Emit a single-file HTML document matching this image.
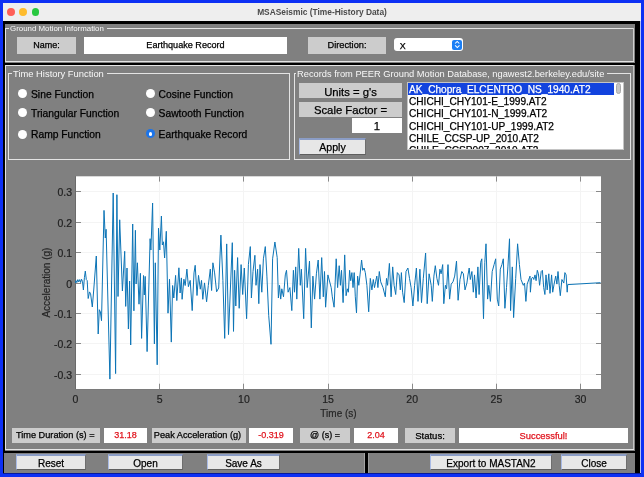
<!DOCTYPE html>
<html><head><meta charset="utf-8">
<style>
*{margin:0;padding:0;box-sizing:border-box}
html,body{width:644px;height:477px;overflow:hidden;background:#0d30f4;font-family:"Liberation Sans",sans-serif}
body{will-change:transform}
.a{position:absolute}
.t{position:absolute;white-space:nowrap}
#title{left:3px;top:3px;width:638px;height:18px;background:#eeeeee}
.dot{position:absolute;width:7.8px;height:7.8px;border-radius:50%;top:5px}
#content{left:3px;top:21px;width:637px;height:452px;background:#000}
.gray{background:#808080}
.bl{position:absolute;background:#e4e4e4}
.ptitle{position:absolute;color:#f8f8f8;font-size:9px;background:#808080;padding:0 3px 0 1px;line-height:10px}
.lab{position:absolute;background:#cccccc;color:#000;font-size:9px;text-align:center}
.fld{position:absolute;background:#fff;color:#000;text-align:center}
.radio{position:absolute;width:9px;height:9px;border-radius:50%;background:#fff;margin:0.4px 0 0 0}
.rt{position:absolute;font-size:10.3px;color:#000;white-space:nowrap;line-height:12px;margin-top:1px}
.btn{position:absolute;background:#e7e7e7;border:1px solid #5e5e5e;border-top:2px solid #8b9dc6;border-left-color:#a9bbe6;border-right-color:#6e6e6e;color:#000;text-align:center;font-size:10px}
body{-webkit-text-stroke:0.25px currentColor}
.ptitle,#title .t{-webkit-text-stroke:0}
</style></head><body>
<div id="title" class="a">
  <div class="dot" style="left:4px;background:#fe5f57"></div>
  <div class="dot" style="left:16.4px;background:#febc2e"></div>
  <div class="dot" style="left:28.7px;background:#28c840"></div>
  <div class="t" style="left:0;width:638px;text-align:center;top:3px;font-size:8.4px;font-weight:bold;color:#4a4a4a;line-height:12px">MSASeismic (Time-History Data)</div>
</div>
<div id="content" class="a"></div>
<div class="a" style="left:3px;top:473px;width:638px;height:1px;background:#071a9a"></div>
<div class="a" style="left:640px;top:21px;width:1px;height:452px;background:#b4c0f4"></div>

<!-- Panel 1 -->
<div class="a gray" style="left:5px;top:24px;width:630px;height:39px"></div>
<div class="bl" style="left:5px;top:28px;width:629px;height:1px"></div>
<div class="bl" style="left:5px;top:28px;width:1px;height:34px"></div>
<div class="bl" style="left:633px;top:28px;width:1px;height:34px;background:#cfcfcf"></div>
<div class="bl" style="left:5px;top:61px;width:629px;height:1px"></div>
<div class="ptitle" style="left:9px;top:24px;font-size:7.9px">Ground Motion Information</div>
<div class="lab" style="left:17px;top:37px;width:59px;height:17px;line-height:17px">Name:</div>
<div class="fld" style="left:84px;top:37px;width:203px;height:17px;line-height:17.4px;font-size:9.1px">Earthquake Record</div>
<div class="lab" style="left:308px;top:37px;width:78px;height:17px;line-height:17px;font-size:9.25px">Direction:</div>
<div class="a" style="left:394px;top:38px;width:69px;height:13px;background:#fff;border-radius:3px"></div>
<div class="t" style="left:399.7px;top:39.8px;font-size:8.9px;line-height:13px">X</div>
<div class="a" style="left:452px;top:40px;width:10px;height:10px;background:#1b7ff5;border-radius:2px"></div>
<svg class="a" style="left:452px;top:40px" width="10" height="10"><path d="M3.1 3.5 L5.2 1.4 L7.3 3.5 M3.1 5.3 L5.3 7.5 L7.5 5.3" fill="none" stroke="#fff" stroke-width="1.05"/></svg>

<!-- Panel 2 -->
<div class="a gray" style="left:5px;top:65px;width:630px;height:386px"></div>
<div class="bl" style="left:5px;top:65px;width:629px;height:1px"></div>
<div class="bl" style="left:5px;top:65px;width:1px;height:385px"></div>
<div class="bl" style="left:633px;top:65px;width:1px;height:385px;background:#c4c4c4"></div>
<div class="bl" style="left:5px;top:449px;width:629px;height:1px"></div>

<!-- Time History panel -->
<div class="bl" style="left:8px;top:73px;width:282px;height:1px"></div>
<div class="bl" style="left:8px;top:73px;width:1px;height:87px"></div>
<div class="bl" style="left:289px;top:73px;width:1px;height:87px"></div>
<div class="bl" style="left:8px;top:159px;width:282px;height:1px"></div>
<div class="ptitle" style="left:12px;top:69px;font-size:9.4px">Time History Function</div>
<div class="radio" style="left:18px;top:89px"></div><div class="rt" style="left:31px;top:88px">Sine Function</div>
<div class="radio" style="left:18px;top:108px"></div><div class="rt" style="left:31px;top:107px">Triangular Function</div>
<div class="radio" style="left:18px;top:130px"></div><div class="rt" style="left:31px;top:128px">Ramp Function</div>
<div class="radio" style="left:146px;top:89px"></div><div class="rt" style="left:158.6px;top:88px">Cosine Function</div>
<div class="radio" style="left:146px;top:108px"></div><div class="rt" style="left:158.6px;top:107px">Sawtooth Function</div>
<div class="radio" style="left:146px;top:129px;background:#1b74ea"><div style="position:absolute;left:2.6px;top:2.6px;width:3.8px;height:3.8px;border-radius:50%;background:#fff"></div></div><div class="rt" style="left:158.6px;top:128px">Earthquake Record</div>

<!-- Records panel -->
<div class="bl" style="left:294px;top:73px;width:337px;height:1px"></div>
<div class="bl" style="left:294px;top:73px;width:1px;height:87px"></div>
<div class="bl" style="left:630px;top:73px;width:1px;height:87px"></div>
<div class="bl" style="left:294px;top:159px;width:337px;height:1px"></div>
<div class="ptitle" style="left:296px;top:69px;font-size:9.3px">Records from PEER Ground Motion Database, ngawest2.berkeley.edu/site</div>
<div class="lab" style="left:299px;top:83px;width:103px;height:15px;line-height:18.4px;font-size:11.3px">Units = g's</div>
<div class="lab" style="left:299px;top:102px;width:103px;height:15px;line-height:17.4px;font-size:11.3px">Scale Factor =</div>
<div class="fld" style="left:352px;top:118px;width:50px;height:15px;line-height:17.4px;font-size:11.3px">1</div>
<div class="btn" style="left:299px;top:138px;width:67px;height:17px;line-height:15px;font-size:10.6px">Apply</div>
<div class="a" style="left:407px;top:82px;width:217px;height:68px;background:#fff;border:1px solid #c4c4c4;overflow:hidden">
  <div class="a" style="left:0;top:0;width:206px;height:12px;background:#1243de"></div>
  <div class="t" style="left:1px;top:0.9px;font-size:10.15px;line-height:12.2px;color:#000">
    <div style="color:#fff">AK_Chopra_ELCENTRO_NS_1940.AT2</div>
    <div>CHICHI_CHY101-E_1999.AT2</div>
    <div>CHICHI_CHY101-N_1999.AT2</div>
    <div>CHICHI_CHY101-UP_1999.AT2</div>
    <div>CHILE_CCSP-UP_2010.AT2</div>
    <div>CHILE_CCSP007_2010.AT2</div>
  </div>
  <div class="a" style="left:208px;top:0;width:5px;height:11px;background:#c6c6c6;border:0.6px solid #a9a9a9;border-radius:3px"></div>
</div>

<!-- Chart -->
<svg class="a" style="left:0;top:0" width="644" height="477" viewBox="0 0 644 477">
  <rect x="76" y="176.3" width="525" height="212.7" fill="#fff"/>
  <line x1="75.5" y1="176.3" x2="75.5" y2="389.5" stroke="#6a6a6a" stroke-width="1"/>
  <line x1="75" y1="389.5" x2="601" y2="389.5" stroke="#7a7a7a" stroke-width="1"/>
  <g stroke="#f4f4f4" stroke-width="1">
    <line x1="159.5" y1="176.3" x2="159.5" y2="389"/>
<line x1="243.5" y1="176.3" x2="243.5" y2="389"/>
<line x1="328.5" y1="176.3" x2="328.5" y2="389"/>
<line x1="412.5" y1="176.3" x2="412.5" y2="389"/>
<line x1="496.5" y1="176.3" x2="496.5" y2="389"/>
<line x1="580.5" y1="176.3" x2="580.5" y2="389"/>
<line x1="76" y1="374.5" x2="601" y2="374.5"/>
<line x1="76" y1="343.5" x2="601" y2="343.5"/>
<line x1="76" y1="313.5" x2="601" y2="313.5"/>
<line x1="76" y1="283.5" x2="601" y2="283.5"/>
<line x1="76" y1="252.5" x2="601" y2="252.5"/>
<line x1="76" y1="222.5" x2="601" y2="222.5"/>
<line x1="76" y1="191.5" x2="601" y2="191.5"/>
  </g>
  <g stroke="#8a8a8a" stroke-width="1">
    <line x1="159.5" y1="389" x2="159.5" y2="383.7"/>
<line x1="159.5" y1="176.3" x2="159.5" y2="181.6"/>
<line x1="243.5" y1="389" x2="243.5" y2="383.7"/>
<line x1="243.5" y1="176.3" x2="243.5" y2="181.6"/>
<line x1="328.5" y1="389" x2="328.5" y2="383.7"/>
<line x1="328.5" y1="176.3" x2="328.5" y2="181.6"/>
<line x1="412.5" y1="389" x2="412.5" y2="383.7"/>
<line x1="412.5" y1="176.3" x2="412.5" y2="181.6"/>
<line x1="496.5" y1="389" x2="496.5" y2="383.7"/>
<line x1="496.5" y1="176.3" x2="496.5" y2="181.6"/>
<line x1="580.5" y1="389" x2="580.5" y2="383.7"/>
<line x1="580.5" y1="176.3" x2="580.5" y2="181.6"/>
<line x1="76" y1="374.5" x2="81" y2="374.5"/>
<line x1="596" y1="374.5" x2="601" y2="374.5"/>
<line x1="76" y1="343.5" x2="81" y2="343.5"/>
<line x1="596" y1="343.5" x2="601" y2="343.5"/>
<line x1="76" y1="313.5" x2="81" y2="313.5"/>
<line x1="596" y1="313.5" x2="601" y2="313.5"/>
<line x1="76" y1="283.5" x2="81" y2="283.5"/>
<line x1="596" y1="283.5" x2="601" y2="283.5"/>
<line x1="76" y1="252.5" x2="81" y2="252.5"/>
<line x1="596" y1="252.5" x2="601" y2="252.5"/>
<line x1="76" y1="222.5" x2="81" y2="222.5"/>
<line x1="596" y1="222.5" x2="601" y2="222.5"/>
<line x1="76" y1="191.5" x2="81" y2="191.5"/>
<line x1="596" y1="191.5" x2="601" y2="191.5"/>
  </g>
  <rect x="75" y="176.5" width="526.9" height="212.9" fill="none" stroke="#6e6e6e" stroke-width="0" />
  <polyline fill="none" stroke="#0c74b6" stroke-width="1" stroke-linejoin="round" points="75.6,283.0 75.9,280.6 76.8,282.5 77.8,279.6 78.7,281.9 79.7,279.6 80.6,282.5 81.5,279.2 82.5,281.5 83.4,290.0 84.4,277.7 85.3,271.1 86.3,279.6 87.2,280.6 88.2,298.5 89.5,291.9 90.6,293.8 92.3,307.0 93.8,289.0 96.3,256.0 98.2,334.0 99.3,309.7 100.4,312.0 101.5,320.7 104.0,210.4 105.3,238.0 106.1,229.3 109.9,379.1 113.2,193.0 115.6,373.6 116.9,194.7 118.0,296.5 119.7,219.8 122.4,291.0 124.7,251.3 125.7,306.4 127.0,268.0 128.4,329.0 129.6,281.0 130.7,345.0 132.7,224.0 133.9,310.8 135.4,230.3 136.1,284.0 137.4,262.8 139.0,304.2 140.4,273.3 141.6,338.4 143.5,275.5 144.3,295.0 145.2,276.4 147.1,351.6 150.1,238.7 150.9,250.0 152.6,203.0 154.4,343.9 155.3,262.8 157.2,364.8 158.5,228.2 159.8,250.0 161.4,216.0 162.3,245.0 163.5,241.8 164.6,258.0 166.3,231.3 168.0,313.2 169.5,279.2 171.3,342.1 172.6,285.5 173.8,298.0 175.6,275.4 176.8,300.6 178.9,267.8 180.1,293.0 181.4,277.9 182.1,299.3 183.9,279.2 185.2,285.5 186.9,269.1 188.4,286.7 190.2,280.4 192.2,310.6 194.0,272.9 195.2,265.3 197.0,295.5 198.5,275.4 200.3,289.2 201.5,280.4 202.8,299.3 204.5,282.9 206.6,301.8 208.3,285.5 210.3,269.1 211.6,290.5 212.9,262.8 214.6,272.9 216.6,291.8 218.7,288.0 220.9,235.1 222.9,280.4 224.7,338.4 226.7,243.9 228.5,334.6 232.3,242.7 233.5,331.4 234.6,270.3 235.8,306.0 237.6,257.6 239.2,308.3 241.1,264.6 242.7,294.5 244.3,268.0 246.6,318.7 248.4,264.6 250.3,246.6 251.4,298.0 253.0,271.5 254.9,255.3 256.0,285.3 257.6,269.2 258.8,303.7 260.0,264.6 261.8,292.2 263.4,258.8 265.3,246.6 266.9,276.1 268.7,315.3 271.0,344.3 272.6,258.8 274.9,242.0 277.2,257.6 278.4,298.0 279.5,285.3 280.7,299.1 281.8,288.8 283.5,296.8 285.3,274.9 286.5,270.3 288.1,292.2 289.9,287.6 291.8,310.6 293.4,270.3 294.5,292.2 295.7,266.9 296.8,299.1 298.7,248.4 300.3,285.3 301.4,269.2 303.7,318.7 305.6,248.4 307.2,287.6 309.5,261.1 311.3,327.9 312.9,276.1 314.6,299.1 316.4,273.8 318.2,260.0 319.9,299.1 321.7,257.6 323.3,296.8 324.5,271.5 325.6,307.2 327.9,274.9 331.2,287.6 332.3,296.8 334.1,307.2 336.2,258.8 337.6,287.6 339.2,265.7 340.4,285.3 341.5,270.3 343.1,302.6 344.7,254.9 346.1,295.7 347.3,288.8 348.4,292.2 349.6,270.3 350.7,280.7 351.9,272.6 353.0,287.6 354.2,272.6 355.3,296.8 356.5,312.9 357.6,276.1 358.8,285.3 360.0,274.9 361.6,260.0 362.7,270.3 364.1,268.0 365.3,272.6 366.9,285.3 368.7,311.8 370.3,278.4 371.9,289.9 373.3,279.5 374.5,287.6 375.6,281.8 376.8,276.1 377.9,287.6 379.3,271.5 380.7,281.8 383.0,287.6 385.3,296.8 386.5,278.4 387.6,285.3 389.4,263.4 391.1,296.8 392.7,266.9 394.1,285.3 395.7,294.5 397.3,272.6 399.1,274.9 400.3,289.9 401.4,272.6 402.6,292.2 404.2,302.6 406.0,271.5 407.9,268.0 409.5,278.4 411.1,287.6 412.9,306.0 414.6,285.3 416.4,268.0 418.0,301.4 419.9,269.2 421.5,302.6 423.3,278.4 425.6,253.0 427.2,303.7 429.1,273.8 431.2,285.3 432.3,301.4 433.9,276.1 435.3,265.7 436.9,278.4 438.5,285.3 439.9,269.2 441.1,273.8 442.7,264.6 443.8,303.7 445.4,285.3 446.6,288.8 448.0,264.6 449.6,299.1 451.2,284.1 453.0,281.8 454.7,276.1 456.5,261.1 458.1,300.3 460.0,279.5 461.8,271.5 463.4,273.8 465.0,289.9 466.9,283.0 468.0,274.9 469.2,268.0 470.3,279.5 471.9,271.5 473.3,292.2 474.5,274.9 476.1,298.0 477.9,266.9 479.1,294.5 480.7,262.3 481.8,258.8 483.5,318.7 484.8,262.3 486.0,243.8 487.6,299.1 488.8,285.3 490.4,301.4 492.2,271.5 494.1,264.6 495.7,258.8 497.3,299.1 498.7,306.0 500.3,269.2 501.9,264.6 503.3,258.8 504.9,308.3 506.5,287.6 507.9,266.9 509.5,238.8 510.6,310.6 512.3,266.9 513.6,317.6 515.7,278.4 517.6,243.8 519.4,264.6 521.0,279.5 523.3,285.3 524.5,283.0 525.9,301.4 527.2,284.1 530.0,276.1 530.4,292.2 531.5,278.4 532.7,277.2 533.8,279.5 535.0,274.9 536.1,280.7 537.3,270.3 538.4,273.8 539.6,285.3 541.2,271.5 542.4,270.3 543.7,287.6 544.9,294.5 546.0,274.9 547.2,289.9 548.8,273.8 550.0,293.4 551.6,274.9 552.7,292.2 554.1,284.1 555.7,276.1 556.9,284.1 558.0,271.5 559.2,285.3 560.3,295.7 561.9,279.5 563.8,283.0 564.9,272.6 566.1,274.9 567.2,292.2 567.7,284.6 600.5,282.7"/>
  <g font-family="Liberation Sans" font-size="10.5" fill="#222" stroke="#222" stroke-width="0.2">
    <text x="75.5" y="403.4" text-anchor="middle">0</text>
<text x="159.7" y="403.4" text-anchor="middle">5</text>
<text x="243.9" y="403.4" text-anchor="middle">10</text>
<text x="328.0" y="403.4" text-anchor="middle">15</text>
<text x="412.2" y="403.4" text-anchor="middle">20</text>
<text x="496.4" y="403.4" text-anchor="middle">25</text>
<text x="580.6" y="403.4" text-anchor="middle">30</text>
<text x="72" y="378.9" text-anchor="end">-0.3</text>
<text x="72" y="347.9" text-anchor="end">-0.2</text>
<text x="72" y="317.9" text-anchor="end">-0.1</text>
<text x="72" y="287.9" text-anchor="end">0</text>
<text x="72" y="256.9" text-anchor="end">0.1</text>
<text x="72" y="226.9" text-anchor="end">0.2</text>
<text x="72" y="195.9" text-anchor="end">0.3</text>
  </g>
  <text x="338.5" y="416.7" font-family="Liberation Sans" font-size="10" fill="#262626" stroke="#262626" stroke-width="0.2" text-anchor="middle">Time (s)</text>
  <text transform="translate(49.5,282.6) rotate(-90)" font-family="Liberation Sans" font-size="10" fill="#262626" stroke="#262626" stroke-width="0.2" text-anchor="middle">Acceleration (g)</text>
</svg>

<!-- info row -->
<div class="lab" style="left:12px;top:428px;width:88px;height:15px;line-height:15px;font-size:9.2px;padding-right:1.5px">Time Duration (s) =</div>
<div class="fld" style="left:104px;top:428px;width:43px;height:15px;line-height:15px;font-size:9px;color:#e0141e">31.18</div>
<div class="lab" style="left:152px;top:428px;width:94px;height:15px;line-height:15px;font-size:9.2px;padding-right:3px">Peak Acceleration (g)</div>
<div class="fld" style="left:249px;top:428px;width:44px;height:15px;line-height:15px;font-size:9px;color:#e0141e">-0.319</div>
<div class="lab" style="left:300px;top:428px;width:50px;height:15px;line-height:15px">@ (s) =</div>
<div class="fld" style="left:354px;top:428px;width:44px;height:15px;line-height:15px;font-size:9px;color:#e0141e">2.04</div>
<div class="lab" style="left:405px;top:428px;width:50px;height:15px;line-height:15px;font-size:9.5px">Status:</div>
<div class="fld" style="left:459px;top:428px;width:169px;height:15px;line-height:15px;font-size:9.4px;color:#e0141e">Successful!</div>

<!-- bottom panels -->
<div class="a gray" style="left:4px;top:453px;width:361px;height:20px"></div>
<div class="a gray" style="left:368px;top:453px;width:267px;height:20px"></div>
<div class="a" style="left:364px;top:453px;width:1px;height:20px;background:#a4a4a4"></div>
<div class="a" style="left:368px;top:453px;width:1px;height:20px;background:#9a9a9a"></div>
<div class="btn" style="left:16px;top:454px;width:70px;height:16px;line-height:15.5px">Reset</div>
<div class="btn" style="left:108px;top:454px;width:75px;height:16px;line-height:15.5px">Open</div>
<div class="btn" style="left:207px;top:454px;width:73px;height:16px;line-height:15.5px">Save As</div>
<div class="btn" style="left:430px;top:454px;width:122px;height:16px;line-height:15.5px">Export to MASTAN2</div>
<div class="btn" style="left:561px;top:454px;width:66px;height:16px;line-height:15.5px">Close</div>
</body></html>
